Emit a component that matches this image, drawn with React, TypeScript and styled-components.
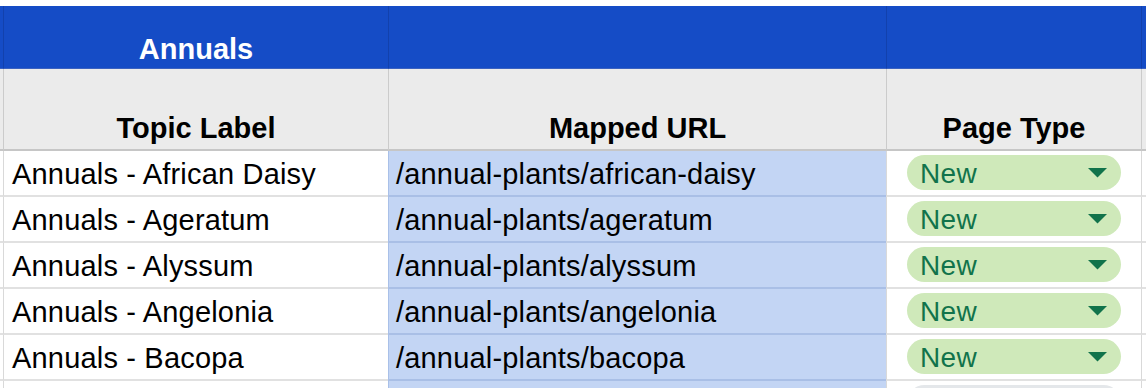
import React from 'react'
import styled, { createGlobalStyle } from 'styled-components'

const GlobalStyle = createGlobalStyle`
    html, body {
        margin: 0;
        padding: 0;
        background: #ffffff;
        overflow: hidden;
    }
    body {
        font-family: "Liberation Sans", Arial, Helvetica, sans-serif;
    }
`

const COLUMNS = '3px 385px 498px 255px 1fr'

const rows = [
    { label: 'Annuals - African Daisy', url: '/annual-plants/african-daisy', type: 'New' },
    { label: 'Annuals - Ageratum', url: '/annual-plants/ageratum', type: 'New' },
    { label: 'Annuals - Alyssum', url: '/annual-plants/alyssum', type: 'New' },
    { label: 'Annuals - Angelonia', url: '/annual-plants/angelonia', type: 'New' },
    { label: 'Annuals - Bacopa', url: '/annual-plants/bacopa', type: 'New' },
]

const App = () => {
    return (
        <>
            <GlobalStyle />
            <Sheet>
                <Row>
                    <BandCell $edge />
                    <BandCell>Annuals</BandCell>
                    <BandCell />
                    <BandCell />
                    <BandCell />
                </Row>
                <Row>
                    <HeadCell $edge />
                    <HeadCell>Topic Label</HeadCell>
                    <HeadCell>Mapped URL</HeadCell>
                    <HeadCell>Page Type</HeadCell>
                    <HeadCell />
                </Row>
                {rows.map((r) => (
                    <Row key={r.url}>
                        <DataCell $edge />
                        <DataCell>{r.label}</DataCell>
                        <DataCell $url>{r.url}</DataCell>
                        <ChipCell>
                            <Chip>
                                <span>{r.type}</span>
                                <svg width="19" height="10" viewBox="0 0 19 10">
                                    <polygon points="0,0 19,0 9.5,9.5" fill="#11734b" />
                                </svg>
                            </Chip>
                        </ChipCell>
                        <DataCell />
                    </Row>
                ))}
                {/* next row, mostly cut off by the window */}
                <Row>
                    <DataCell $edge />
                    <DataCell />
                    <DataCell $url />
                    <ChipCell>
                        <Chip $blank />
                    </ChipCell>
                    <DataCell />
                </Row>
            </Sheet>
        </>
    )
}

export default App

const Sheet = styled.div`
    box-sizing: border-box;
    padding-top: 6px;
    width: 1146px;
    height: 388px;
    overflow: hidden;
`

const Row = styled.div`
    display: grid;
    grid-template-columns: ${COLUMNS};
`

const BandCell = styled.div<{ $edge?: boolean }>`
    box-sizing: border-box;
    height: 63px;
    background: #154cc6;
    border-left: ${(p) => (p.$edge ? 'none' : '1px solid #1241ad')};
    border-bottom: 1px solid #3b62c0;
    color: #ffffff;
    font-weight: 700;
    font-size: 29px;
    line-height: 33px;
    display: flex;
    align-items: flex-end;
    justify-content: center;
    padding-bottom: 2px;
`

const HeadCell = styled.div<{ $edge?: boolean }>`
    box-sizing: border-box;
    height: 82px;
    background: #ebebeb;
    border-left: ${(p) => (p.$edge ? 'none' : '1px solid #cbcbcb')};
    border-bottom: 2px solid #c6c6c6;
    color: #000000;
    font-weight: 700;
    font-size: 29px;
    line-height: 33px;
    display: flex;
    align-items: flex-end;
    justify-content: center;
    padding-bottom: 4px;
`

const DataCell = styled.div<{ $edge?: boolean; $url?: boolean }>`
    box-sizing: border-box;
    height: 46px;
    background: ${(p) => (p.$url ? '#c3d5f4' : '#ffffff')};
    border-left: ${(p) => (p.$edge ? 'none' : p.$url ? '1px solid #a9c0e8' : '1px solid #d9d9d9')};
    border-bottom: 2px solid ${(p) => (p.$url ? '#a9bfe6' : '#e1e1e1')};
    color: #000000;
    font-size: 29px;
    line-height: 33px;
    letter-spacing: 0.18px;
    white-space: nowrap;
    overflow: hidden;
    display: flex;
    align-items: flex-end;
    padding: 0 0 4px ${(p) => (p.$url ? '7px' : '8px')};
`

const ChipCell = styled.div`
    box-sizing: border-box;
    height: 46px;
    background: #ffffff;
    border-left: 1px solid #d9d9d9;
    border-bottom: 2px solid #e1e1e1;
    padding: 4px 20px 0 20px;
`

const Chip = styled.div<{ $blank?: boolean }>`
    box-sizing: border-box;
    height: 35px;
    border-radius: 18px;
    background: ${(p) => (p.$blank ? '#e4e7ea' : '#cfe9ba')};
    color: #11734b;
    font-size: 28px;
    line-height: 35px;
    letter-spacing: 0.3px;
    display: flex;
    align-items: center;
    justify-content: space-between;
    padding: 1px 14px 0 13px;
    span {
        display: block;
    }
    svg {
        display: block;
        margin-top: -1px;
    }
`
